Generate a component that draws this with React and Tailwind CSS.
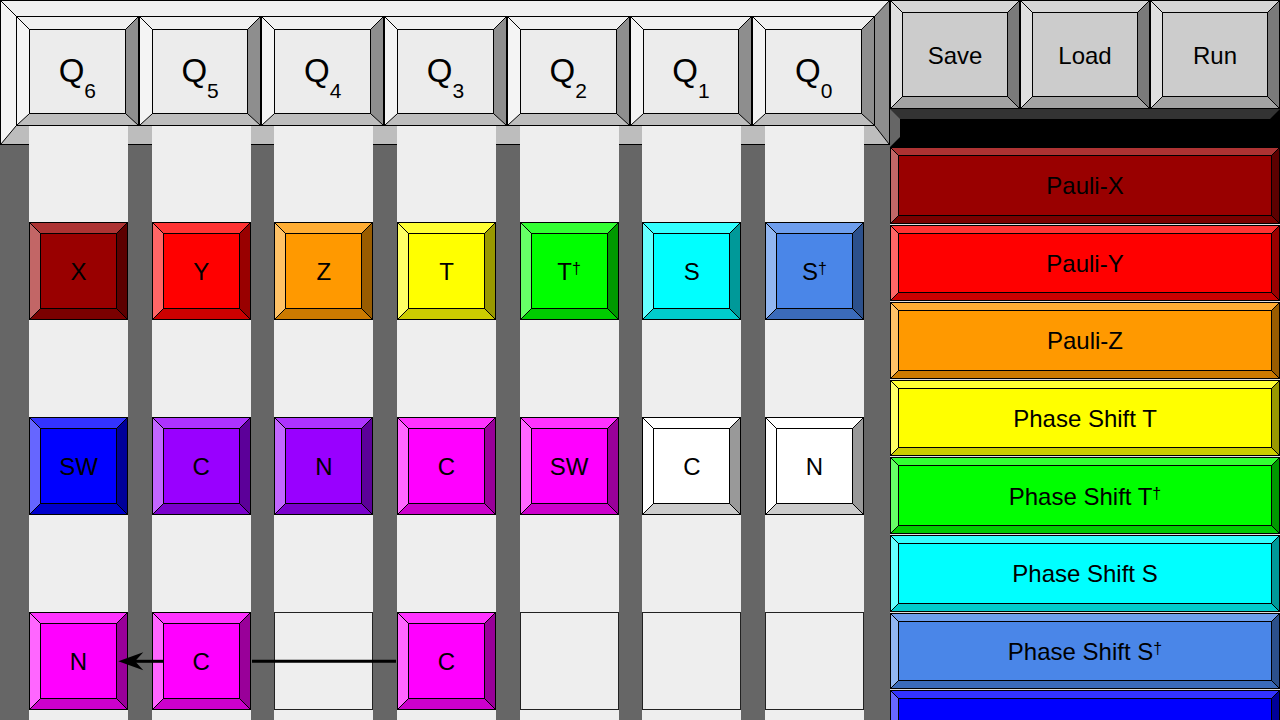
import React from "react";

const S = {
  dred: { bev: "border-t-[#ad3333] border-l-[#c26666] border-r-[#5c0000] border-b-[#7a0000]", face: "bg-[#990000]" },
  red: { bev: "border-t-[#ff3333] border-l-[#ff6666] border-r-[#990000] border-b-[#cc0000]", face: "bg-[#ff0000]" },
  orange: { bev: "border-t-[#ffad33] border-l-[#ffc266] border-r-[#995c00] border-b-[#cc7a00]", face: "bg-[#ff9900]" },
  yellow: { bev: "border-t-[#ffff33] border-l-[#ffff66] border-r-[#999900] border-b-[#cccc00]", face: "bg-[#ffff00]" },
  green: { bev: "border-t-[#33ff33] border-l-[#66ff66] border-r-[#009900] border-b-[#00cc00]", face: "bg-[#00ff00]" },
  cyan: { bev: "border-t-[#33ffff] border-l-[#66ffff] border-r-[#009999] border-b-[#00cccc]", face: "bg-[#00ffff]" },
  corn: { bev: "border-t-[#6e9eed] border-l-[#91b6f1] border-r-[#2c508b] border-b-[#3b6bba]", face: "bg-[#4a86e8]" },
  blue: { bev: "border-t-[#3333ff] border-l-[#6666ff] border-r-[#000099] border-b-[#0000cc]", face: "bg-[#0000ff]" },
  purple: { bev: "border-t-[#ad33ff] border-l-[#c266ff] border-r-[#5c0099] border-b-[#7a00cc]", face: "bg-[#9900ff]" },
  magenta: { bev: "border-t-[#ff33ff] border-l-[#ff66ff] border-r-[#990099] border-b-[#cc00cc]", face: "bg-[#ff00ff]" },
  white: { bev: "border-t-white border-l-white border-r-[#999999] border-b-[#cccccc]", face: "bg-white" },
  q: { bev: "border-t-[#f0f0f0] border-l-[#f4f4f4] border-r-[#8e8e8e] border-b-[#bdbdbd]", face: "bg-[#ececec]" },
  btn: { bev: "border-t-[#d6d6d6] border-l-[#e0e0e0] border-r-[#7a7a7a] border-b-[#a3a3a3]", face: "bg-[#cccccc]" },
};

function Bevel({ s, widths, t, l, r, b, className = "", faceClass = "", plain = false, children }) {
  return (
    <div className={`relative border border-black ${className}`}>
      <div className={`h-full w-full ${widths} ${s.bev}`}>
        <div className={`h-full w-full ${plain ? "" : "border border-black"} ${s.face} ${faceClass}`}>
          {children}
        </div>
      </div>
      <svg className="absolute top-0 left-0 pointer-events-none" width={l} height={t}>
        <line x1="0" y1="0" x2={l} y2={t} stroke="#000" strokeWidth="1" />
      </svg>
      <svg className="absolute top-0 right-0 pointer-events-none" width={r} height={t}>
        <line x1={r} y1="0" x2="0" y2={t} stroke="#000" strokeWidth="1" />
      </svg>
      <svg className="absolute bottom-0 left-0 pointer-events-none" width={l} height={b}>
        <line x1="0" y1={b} x2={l} y2="0" stroke="#000" strokeWidth="1" />
      </svg>
      <svg className="absolute bottom-0 right-0 pointer-events-none" width={r} height={b}>
        <line x1={r} y1={b} x2="0" y2="0" stroke="#000" strokeWidth="1" />
      </svg>
    </div>
  );
}

const Dag = () => <span className="align-[6px] text-[16px] leading-none">†</span>;

const columns = [
  [{ s: "dred", l: "X" }, { s: "blue", l: "SW" }, { s: "magenta", l: "N" }],
  [{ s: "red", l: "Y" }, { s: "purple", l: "C" }, { s: "magenta", l: "C" }],
  [{ s: "orange", l: "Z" }, { s: "purple", l: "N" }, null],
  [{ s: "yellow", l: "T" }, { s: "magenta", l: "C" }, { s: "magenta", l: "C" }],
  [{ s: "green", l: "T", d: true }, { s: "magenta", l: "SW" }, null],
  [{ s: "cyan", l: "S" }, { s: "white", l: "C" }, null],
  [{ s: "corn", l: "S", d: true }, { s: "white", l: "N" }, null],
];

const qs = ["6", "5", "4", "3", "2", "1", "0"];

const palette = [
  { s: "dred", l: "Pauli-X" },
  { s: "red", l: "Pauli-Y" },
  { s: "orange", l: "Pauli-Z" },
  { s: "yellow", l: "Phase Shift T" },
  { s: "green", l: "Phase Shift T", d: true },
  { s: "cyan", l: "Phase Shift S" },
  { s: "corn", l: "Phase Shift S", d: true },
  { s: "blue", l: "Swap" },
];

function Slot({ g }) {
  if (!g) return <div className="h-[98px] shrink-0 border border-[#222222]" />;
  return (
    <Bevel
      s={S[g.s]}
      widths="border-[10px]"
      t={10}
      l={10}
      r={10}
      b={10}
      className="h-[98px] shrink-0"
      faceClass="flex items-center justify-center pt-px"
    >
      <span className="text-[24px] leading-none text-black">
        {g.l}
        {g.d && <Dag />}
      </span>
    </Bevel>
  );
}

export default function App() {
  return (
    <div className="flex w-[1280px] h-[720px] overflow-hidden bg-[#666666] font-['Liberation_Sans',Arial,sans-serif] text-black">
      {/* Left: circuit */}
      <div className="w-[890px] h-[720px] flex flex-col shrink-0">
        <Bevel
          s={S.q}
          widths="border-t-[15px] border-l-[15px] border-r-[14px] border-b-[18px]"
          t={15}
          l={15}
          r={14}
          b={18}
          plain
          className="h-[145px] w-[890px] shrink-0"
          faceClass="flex"
        >
          {qs.map((n) => (
            <Bevel
              key={n}
              s={S.q}
              widths="border-t-[12px] border-l-[12px] border-r-[12px] border-b-[11px]"
              t={12}
              l={12}
              r={12}
              b={11}
              className="flex-1 h-full"
              faceClass="text-center pt-[24px]"
            >
              <span className="text-[33px] leading-[33px]">
                Q<span className="text-[21px] align-[-16px] leading-none">{n}</span>
              </span>
            </Bevel>
          ))}
        </Bevel>

        <div className="relative -mt-[19px] flex-1 grid grid-cols-7 gap-x-[23.67px] pl-[29px] pr-[26px]">
          {columns.map((col, i) => (
            <div key={i} className="flex flex-col bg-[#eeeeee]">
              <div className="h-[96px] shrink-0" />
              <Slot g={col[0]} />
              <div className="h-[97px] shrink-0" />
              <Slot g={col[1]} />
              <div className="h-[97px] shrink-0" />
              <Slot g={col[2]} />
            </div>
          ))}
          <svg className="absolute top-0 left-0 pointer-events-none" width="890" height="594">
            <line x1="252" y1="535.3" x2="396" y2="535.3" stroke="#000" strokeWidth="3" />
            <line x1="134" y1="535.3" x2="164" y2="535.3" stroke="#000" strokeWidth="3" />
            <polygon points="118.3,535.3 143.3,526.3 135,535.3 143.3,544.3" fill="#000" />
          </svg>
        </div>
      </div>

      {/* Right: toolbar + palette */}
      <div className="w-[390px] h-[720px] flex flex-col shrink-0">
        <div className="h-[109px] flex shrink-0">
          {["Save", "Load", "Run"].map((t) => (
            <Bevel
              key={t}
              s={S.btn}
              widths="border-[11px]"
              t={11}
              l={11}
              r={11}
              b={11}
              className="flex-1 h-full"
              faceClass="flex items-center justify-center pt-[3px]"
            >
              <span className="text-[24px] leading-none">{t}</span>
            </Bevel>
          ))}
        </div>
        <div className="h-[38px] shrink-0 border-[10px] border-t-[#333333] border-l-[#666666] border-r-black border-b-black bg-black" />
        <div className="flex-1 flex flex-col gap-px bg-[#e0e0e0] overflow-hidden">
          {palette.map((p, i) => (
            <Bevel
              key={i}
              s={S[p.s]}
              widths="border-[7px]"
              t={7}
              l={7}
              r={7}
              b={7}
              className="h-[76.6px] shrink-0"
              faceClass="flex items-center justify-center pt-[2px]"
            >
              <span className="text-[24px] leading-none">
                {p.l}
                {p.d && <Dag />}
              </span>
            </Bevel>
          ))}
        </div>
      </div>
    </div>
  );
}
